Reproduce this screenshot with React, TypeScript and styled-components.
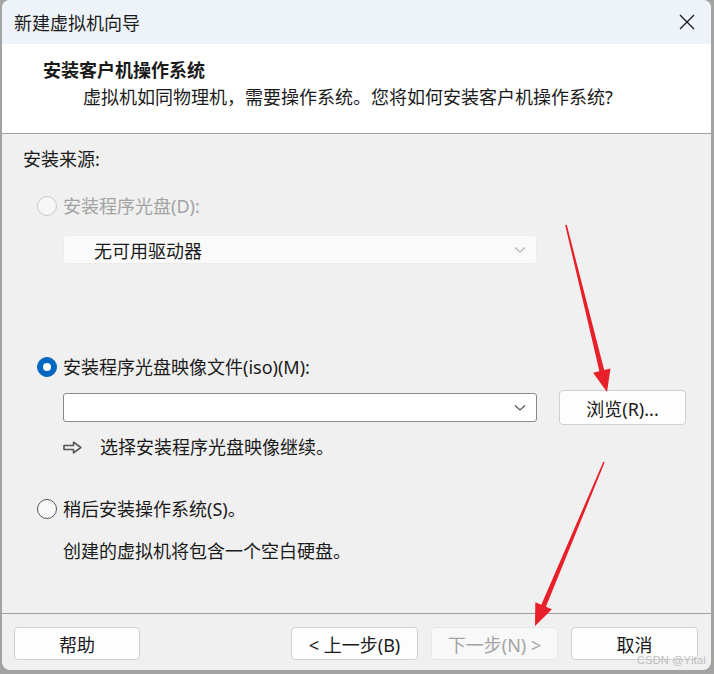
import React from 'react';
import styled, { createGlobalStyle } from 'styled-components';

const GlobalStyle = createGlobalStyle`
  html, body {
    margin: 0;
    padding: 0;
    background: #a3a3a3;
  }
  * {
    box-sizing: border-box;
  }
`;

const FONT = `"Noto Sans", "Noto Sans CJK SC", sans-serif`;

const Page = styled.div`
  position: relative;
  width: 714px;
  height: 674px;
  overflow: hidden;
  font-family: ${FONT};
  color: #1a1a1a;
`;

const Window = styled.div`
  margin-left: 2px;
  width: 709px;
  height: 670px;
  border-radius: 8px;
  overflow: hidden;
  background: #f0f0f0;
  display: flex;
  flex-direction: column;
`;

const TitleBar = styled.div`
  height: 44px;
  flex: none;
  background: #eef3f9;
  display: flex;
  align-items: center;
  justify-content: space-between;
  padding: 0 16px 0 12px;
  font-size: 18px;
`;

const CloseButton = styled.div`
  width: 16px;
  height: 16px;
  display: flex;
`;

const Header = styled.div`
  height: 90px;
  flex: none;
  background: #ffffff;
  border-bottom: 1px solid #a0a0a0;
  padding: 14px 0 0 41px;
`;

const HeaderTitle = styled.div`
  font-size: 18px;
  font-weight: 700;
  line-height: 24px;
`;

const HeaderSub = styled.div`
  font-size: 18px;
  line-height: 24px;
  margin: 3px 0 0 40px;
`;

const Body = styled.div`
  flex: 1;
  padding: 13px 0 0 21px;
  font-size: 18px;
`;

const SourceLabel = styled.div`
  line-height: 24px;
`;

const Options = styled.div`
  margin-left: 14px;
  display: flex;
  flex-direction: column;
`;

const OptionRow = styled.label<{ $top: number; $disabled?: boolean }>`
  display: flex;
  align-items: center;
  gap: 6px;
  height: 24px;
  line-height: 24px;
  margin-top: ${(p) => p.$top}px;
  color: ${(p) => (p.$disabled ? '#a3a3a3' : '#1a1a1a')};
`;

const Radio = styled.span<{ $checked?: boolean; $disabled?: boolean }>`
  width: 20px;
  height: 20px;
  flex: none;
  border-radius: 50%;
  display: flex;
  align-items: center;
  justify-content: center;
  background: ${(p) => (p.$checked ? '#0067c0' : p.$disabled ? '#f7f7f7' : '#f9f9f9')};
  border: 1px solid
    ${(p) => (p.$checked ? '#0067c0' : p.$disabled ? '#c9c9c9' : '#555555')};

  &::after {
    content: '';
    display: ${(p) => (p.$checked ? 'block' : 'none')};
    width: 8px;
    height: 8px;
    border-radius: 50%;
    background: #ffffff;
  }
`;

const Indented = styled.div<{ $top: number }>`
  margin: ${(p) => p.$top}px 0 0 26px;
  display: flex;
  align-items: center;
`;

const Select = styled.div<{ $disabled?: boolean }>`
  width: 474px;
  height: 29px;
  display: flex;
  align-items: center;
  justify-content: space-between;
  padding: 0 10px 0 30px;
  border-radius: 3px;
  background: ${(p) => (p.$disabled ? '#fafafa' : '#ffffff')};
  border: 1px solid ${(p) => (p.$disabled ? '#ececec' : '#8a8a8a')};
  color: #1a1a1a;
  font-size: 18px;
`;

const Chevron = ({ color }: { color: string }) => (
  <svg width="12" height="8" viewBox="0 0 12 8">
    <path d="M1 1.5 L6 6 L11 1.5" fill="none" stroke={color} strokeWidth="1.2" />
  </svg>
);

const Button = styled.button<{ $disabled?: boolean; $width?: number }>`
  width: ${(p) => p.$width ?? 127}px;
  height: 33px;
  flex: none;
  border-radius: 4px;
  font-family: ${FONT};
  font-size: 18px;
  padding: 0;
  background: ${(p) => (p.$disabled ? '#f8f8f8' : '#fdfdfd')};
  border: 1px solid ${(p) => (p.$disabled ? '#e6e6e6' : '#d0d0d0')};
  color: ${(p) => (p.$disabled ? '#a3a3a3' : '#1a1a1a')};
`;

const BrowseButton = styled(Button)`
  height: 35px;
  margin-left: 22px;
`;

const Hint = styled.div`
  margin: 10px 0 0 26px;
  display: flex;
  align-items: center;
  height: 24px;
  line-height: 24px;
  gap: 18px;
`;

const Desc = styled.div`
  margin: 18px 0 0 26px;
  line-height: 24px;
`;

const Footer = styled.div`
  height: 57px;
  flex: none;
  border-top: 1px solid #a0a0a0;
  display: flex;
  align-items: flex-start;
  padding: 13px 13px 0 12px;
`;

const NavGroup = styled.div`
  margin-left: auto;
  display: flex;
  gap: 13px;
`;

const Watermark = styled.div`
  position: absolute;
  right: 8px;
  top: 654px;
  font-family: "Liberation Sans", sans-serif;
  font-size: 11px;
  color: #bdbdbd;
  letter-spacing: 0.2px;
`;

const Overlay = styled.svg`
  position: absolute;
  left: 0;
  top: 0;
  pointer-events: none;
`;

export default function App() {
  return (
    <Page>
      <GlobalStyle />
      <Window>
        <TitleBar>
          <span>新建虚拟机向导</span>
          <CloseButton>
            <svg width="16" height="16" viewBox="0 0 16 16">
              <path d="M1 1 L15 15 M15 1 L1 15" stroke="#1a1a1a" strokeWidth="1.3" />
            </svg>
          </CloseButton>
        </TitleBar>
        <Header>
          <HeaderTitle>安装客户机操作系统</HeaderTitle>
          <HeaderSub>虚拟机如同物理机，需要操作系统。您将如何安装客户机操作系统?</HeaderSub>
        </Header>
        <Body>
          <SourceLabel>安装来源:</SourceLabel>
          <Options>
            <OptionRow $top={23} $disabled>
              <Radio $disabled />
              安装程序光盘(D):
            </OptionRow>
            <Indented $top={17}>
              <Select $disabled>
                <span>无可用驱动器</span>
                <Chevron color="#b5b5b5" />
              </Select>
            </Indented>
            <OptionRow $top={91}>
              <Radio $checked />
              安装程序光盘映像文件(iso)(M):
            </OptionRow>
            <Indented $top={11}>
              <Select>
                <span />
                <Chevron color="#555555" />
              </Select>
              <BrowseButton>浏览(R)...</BrowseButton>
            </Indented>
            <Hint>
              <svg width="19" height="13" viewBox="0 0 19 13">
                <path
                  d="M1 4.5 H10.5 V1.2 L17.8 6.5 L10.5 11.8 V8.5 H1 Z"
                  fill="none"
                  stroke="#555555"
                  strokeWidth="1.6"
                  strokeLinejoin="round"
                />
              </svg>
              <span>选择安装程序光盘映像继续。</span>
            </Hint>
            <OptionRow $top={38}>
              <Radio />
              稍后安装操作系统(S)。
            </OptionRow>
            <Desc>创建的虚拟机将包含一个空白硬盘。</Desc>
          </Options>
        </Body>
        <Footer>
          <Button $width={126}>帮助</Button>
          <NavGroup>
            <Button>&lt; 上一步(B)</Button>
            <Button $disabled>下一步(N) &gt;</Button>
            <Button>取消</Button>
          </NavGroup>
        </Footer>
      </Window>
      <Overlay width="714" height="674" viewBox="0 0 714 674">
        <polygon
          points="565.2,225.2 566.8,224.8 604.2,370 610.5,368.5 607,392 593.1,372.7 599.4,371.2"
          fill="#e8202a"
        />
        <polygon
          points="603.3,461.7 604.7,462.3 545.9,606.8 551.9,609.3 535,626 535.3,602.3 541.3,604.8"
          fill="#e8202a"
        />
      </Overlay>
      <Watermark>CSDN @Yltai</Watermark>
    </Page>
  );
}
